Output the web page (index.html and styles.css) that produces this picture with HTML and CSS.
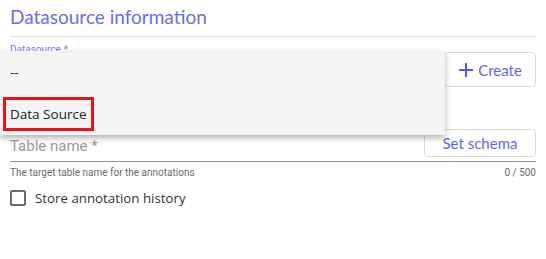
FILE: index.html
```html
<!DOCTYPE html>
<html lang="en">
<head>
    <meta charset="UTF-8">
    <meta name="viewport" content="width=device-width, initial-scale=1.0">
    <title>Datasource information</title>
    <link rel="stylesheet" href="styles.css">
</head>
<body>
    <div class="page">
        <h2 class="section-title">Datasource information</h2>

        <div class="ds-row">
            <div class="select-field">
                <label class="field-label">Datasource *</label>
                <div class="select-box"></div>
            </div>
            <button class="btn btn-create">
                <svg class="plus" width="16" height="16" viewBox="0 0 16 16">
                    <path d="M8 1v14M1 8h14" stroke="#4b5ee8" stroke-width="2" fill="none"/>
                </svg>
                Create
            </button>
        </div>

        <div class="table-row">
            <span class="placeholder">Table name *</span>
            <button class="btn btn-schema">Set schema</button>
        </div>
        <div class="hint-row">
            <span>The target table name for the annotations</span>
            <span>0 / 500</span>
        </div>

        <label class="checkbox-row">
            <span class="box"></span>
            Store annotation history
        </label>

        <!-- open dropdown of the datasource select -->
        <div class="menu">
            <div class="menu-item">--</div>
            <div class="menu-item"><span class="highlight">Data Source</span></div>
        </div>
    </div>
</body>
</html>
```

FILE: styles.css
```css
body {
    margin: 0;
    background: #fff;
    font-family: "Open Sans", sans-serif;
}
.page {
    position: relative;
    padding: 0 10px;
    height: 259px;
}
.section-title {
    margin: 0;
    padding: 5px 0 8px;
    font-family: Lato, sans-serif;
    font-weight: normal;
    font-size: 19px;
    line-height: 23px;
    color: #6b6bf2;
    border-bottom: 1px solid #e0e0e0;
}
.ds-row {
    display: flex;
    align-items: flex-end;
    margin-top: 3px;
}
.select-field {
    flex: 1;
}
.field-label {
    display: block;
    margin-top: 4px;
    font-family: Roboto, sans-serif;
    font-size: 10px;
    line-height: 12px;
    color: #7b7bf2;
}
.select-box {
    height: 31px;
}
.btn {
    background: #fff;
    border: 1px solid #dcdcdc;
    border-radius: 4px;
    font-family: Lato, sans-serif;
    font-size: 15px;
    color: #6464f2;
    cursor: pointer;
}
.btn-create {
    display: flex;
    align-items: center;
    justify-content: center;
    gap: 4px;
    width: 92px;
    height: 35px;
    padding: 0;
}
.table-row {
    display: flex;
    align-items: flex-end;
    justify-content: space-between;
    margin-top: 42px;
    padding-bottom: 4px;
    border-bottom: 1px solid #949494;
}
.placeholder {
    font-family: Roboto, sans-serif;
    font-size: 15px;
    color: #999;
    margin-bottom: 2px;
}
.btn-schema {
    width: 112px;
    height: 28px;
    padding: 0;
}
.hint-row {
    display: flex;
    justify-content: space-between;
    margin-top: 5px;
    font-family: Roboto, sans-serif;
    font-size: 10px;
    color: #6b6b6b;
}
.checkbox-row {
    display: flex;
    align-items: center;
    gap: 9px;
    margin-top: 11px;
    font-size: 13.3px;
    color: #333;
}
.box {
    width: 12px;
    height: 12px;
    border: 2px solid #6b6b6b;
    border-radius: 2px;
}
.menu {
    position: absolute;
    left: 0;
    top: 51px;
    width: 445px;
    background: #f4f4f4;
    box-shadow: 0 3px 6px rgba(0, 0, 0, 0.3);
}
.menu-item {
    height: 42px;
    display: flex;
    align-items: center;
    padding-left: 10px;
    font-size: 13.5px;
    color: #222;
}
.highlight {
    margin-left: -7px;
    padding: 5px 4px;
    border: 3px solid #e8141c;
}
```
